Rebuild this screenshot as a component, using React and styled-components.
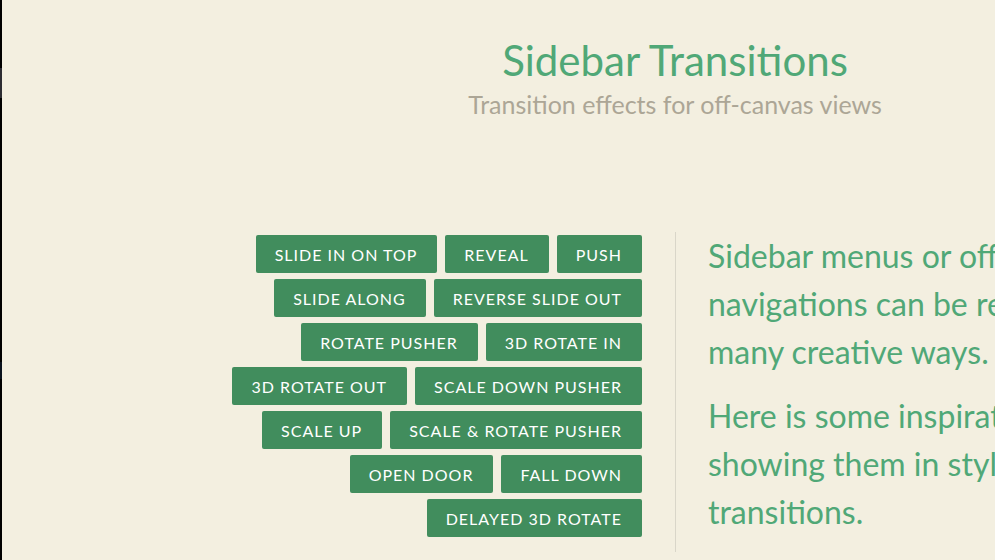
import React from "react";
import styled, { createGlobalStyle } from "styled-components";

const GlobalStyle = createGlobalStyle`
  *, *::before, *::after { box-sizing: border-box; }
  html { background: #f3efe0; overflow: hidden; }
  body { margin: 0; font-family: Lato, "Liberation Sans", sans-serif; color: #50a877; }
`;

const Page = styled.div`
  display: flex;
  min-height: 100vh;
  background: #f3efe0;
  overflow: hidden;
`;

const MenuEdge = styled.div`
  flex: 0 0 2px;
  background: linear-gradient(
    #000 68px, #2d2d33 68px, #2d2d33 98px,
    #000 98px, #000 362px, #0a121d 362px, #0a121d 379px, #000 379px
  );
`;

const Content = styled.div`
  flex: 0 0 calc(100% + 351px);
`;

const Header = styled.header`
  padding: 32px 0 112px;
  text-align: center;
`;

const Title = styled.h1`
  margin: 0;
  font-size: 42px;
  line-height: 56px;
  font-weight: 400;
`;

const Subtitle = styled.p`
  margin: 0;
  font-size: 25px;
  line-height: 32px;
  color: #aca696;
`;

const Main = styled.main`
  display: grid;
  grid-template-columns: 1fr 1fr;
`;

const Effects = styled.section`
  display: flex;
  flex-direction: column;
  gap: 6px;
  padding: 3px 33px 0;
`;

const Row = styled.div`
  display: flex;
  justify-content: flex-end;
  gap: 8px;
`;

const EffectButton = styled.button`
  height: 38px;
  padding: 2px 20px 0 19px;
  border: 0;
  border-radius: 2px;
  background: #418d5d;
  color: #fff;
  font-family: inherit;
  font-size: 16px;
  line-height: 24px;
  letter-spacing: 1px;
  text-transform: uppercase;
  white-space: nowrap;
  cursor: pointer;
`;

const Intro = styled.section`
  padding: 0 32px;
  border-left: 1px solid #d9d6c9;
`;

const Paragraph = styled.p`
  margin: 0 0 16px;
  max-width: 450px;
  font-size: 32px;
  line-height: 48px;
`;

const rows = [
  ["Slide in on top", "Reveal", "Push"],
  ["Slide along", "Reverse slide out"],
  ["Rotate pusher", "3D rotate in"],
  ["3D rotate out", "Scale down pusher"],
  ["Scale up", "Scale & rotate pusher"],
  ["Open door", "Fall down"],
  ["Delayed 3D rotate"],
];

export default function App() {
  return (
    <>
      <GlobalStyle />
      <Page>
        <MenuEdge />
        <Content>
          <Header>
            <Title>Sidebar Transitions</Title>
            <Subtitle>Transition effects for off-canvas views</Subtitle>
          </Header>
          <Main>
            <Effects>
              {rows.map((row) => (
                <Row key={row[0]}>
                  {row.map((label) => (
                    <EffectButton key={label} type="button">{label}</EffectButton>
                  ))}
                </Row>
              ))}
            </Effects>
            <Intro>
              <Paragraph>Sidebar menus or off-canvas navigations can be revealed in many creative ways.</Paragraph>
              <Paragraph>Here is some inspiration for showing them in style using transitions.</Paragraph>
            </Intro>
          </Main>
        </Content>
      </Page>
    </>
  );
}
